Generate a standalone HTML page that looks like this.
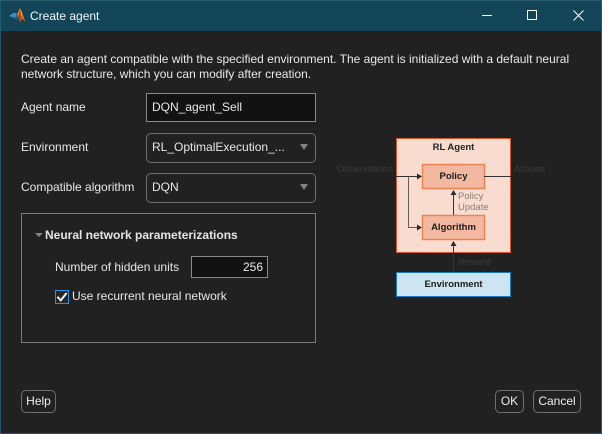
<!DOCTYPE html>
<html>
<head>
<meta charset="utf-8">
<style>
html,body{margin:0;padding:0;background:#212121;}
body{width:602px;height:434px;position:relative;overflow:hidden;font-family:"Liberation Sans",sans-serif;font-size:12px;color:#e8e8e8;}
.a{position:absolute;white-space:nowrap;line-height:14px;}
.box{position:absolute;box-sizing:border-box;}
.tb{background:#134559;left:0;top:0;width:602px;height:31px;}
.in{border:1px solid #8a8a8a;background:#121212;}
.dd{border:1px solid #707070;border-radius:5px;background:#212121;}
.btn{border:1px solid #6f6f6f;border-radius:5px;text-align:center;line-height:21px;color:#eee;background:#212121;}
.tri{position:absolute;width:0;height:0;border-left:4px solid transparent;border-right:4px solid transparent;border-top:6px solid #858585;}
</style>
</head>
<body>
<div class="box tb"></div>
<div class="box" style="left:0;top:0;width:602px;height:434px;border:1px solid #1f5a70;border-top-color:#2a5d70;"></div>
<svg class="box" style="left:9px;top:7px" width="17" height="16" viewBox="0 0 17 16">
  <path d="M0 9 L5 5.5 L8 7 L5.5 11 L3.5 10Z" fill="#3f8fc8"/>
  <path d="M5.5 11 L8 7 L9 5 L9.5 10 L7 13.5Z" fill="#27608f"/>
  <path d="M8 7 L11 1 L13 5.5 L16.5 15 L13.5 11.5 L11 15 L9.5 10Z" fill="#e2701f"/>
  <path d="M11 1 L9.5 10 L11 15 L13 9Z" fill="#c8401a"/>
  <path d="M11 1 L13 5.5 L13.5 11.5 L12 7Z" fill="#f2b73a"/>
</svg>
<div class="a" style="left:30px;top:9px;color:#f2f6f8;">Create agent</div>
<svg class="box" style="left:480px;top:8px" width="110" height="16" viewBox="0 0 110 16">
  <path d="M2 7.5H12" stroke="#fff" stroke-width="1" fill="none"/>
  <rect x="47.5" y="2.5" width="9" height="9" stroke="#fff" stroke-width="1" fill="none"/>
  <path d="M93.5 2.5L103.5 12.5M103.5 2.5L93.5 12.5" stroke="#fff" stroke-width="1" fill="none"/>
</svg>

<div class="a" style="left:21px;top:52px;">Create an agent compatible with the specified environment. The agent is initialized with a default neural</div>
<div class="a" style="left:21px;top:67px;">network structure, which you can modify after creation.</div>

<div class="a" style="left:21px;top:100px;">Agent name</div>
<div class="box in" style="left:146px;top:93px;width:170px;height:29px;"></div>
<div class="a" style="left:152px;top:100px;">DQN_agent_Sell</div>

<div class="a" style="left:21px;top:140px;">Environment</div>
<div class="box dd" style="left:146px;top:133px;width:170px;height:30px;"></div>
<div class="a" style="left:152px;top:140px;">RL_OptimalExecution_...</div>
<div class="tri" style="left:300px;top:144px;"></div>

<div class="a" style="left:21px;top:180px;">Compatible algorithm</div>
<div class="box dd" style="left:146px;top:173px;width:170px;height:30px;"></div>
<div class="a" style="left:152px;top:180px;">DQN</div>
<div class="tri" style="left:300px;top:184px;"></div>

<div class="box" style="left:21px;top:213px;width:295px;height:130px;border:1px solid #7a7a7a;"></div>
<div class="tri" style="left:35px;top:233px;border-left-width:4px;border-right-width:4px;border-top-width:4px;"></div>
<div class="a" style="left:45px;top:228px;font-weight:bold;color:#e4e4e4;">Neural network parameterizations</div>

<div class="a" style="left:55px;top:260px;">Number of hidden units</div>
<div class="box in" style="left:191px;top:256px;width:77px;height:22px;"></div>
<div class="a" style="left:191px;top:260px;width:72px;text-align:right;">256</div>

<div class="box" style="left:55px;top:290px;width:14px;height:14px;border:1px solid #2f8fe0;background:#262626;"></div>
<svg class="box" style="left:55px;top:290px" width="14" height="14" viewBox="0 0 14 14"><path d="M2.4 6.8L5.8 10.4L11.6 3" stroke="#f2f2f2" stroke-width="2" fill="none"/></svg>
<div class="a" style="left:72px;top:289px;">Use recurrent neural network</div>

<svg class="box" style="left:330px;top:130px" width="230" height="175" viewBox="0 0 230 175" font-family="Liberation Sans, sans-serif" font-size="9.5">
  <rect x="66.5" y="8.5" width="114" height="114" fill="#f8dccf" stroke="#d9582b" stroke-width="1"/>
  <rect x="92.5" y="34.5" width="62" height="24" fill="#f3b9a0" stroke="#ee8153" stroke-width="1.5"/>
  <rect x="92.5" y="85.5" width="62" height="24" fill="#f3b9a0" stroke="#ee8153" stroke-width="1.5"/>
  <rect x="66.5" y="142.5" width="114" height="24" fill="#cde4f3" stroke="#1a7cc0" stroke-width="1"/>
  <path d="M66 46.5H88M154 46.5H181" stroke="#3a3230" stroke-width="1" fill="none"/>
  <path d="M78.5 46.5V97.5H88" stroke="#6a5a54" stroke-width="1" fill="none"/>
  <path d="M123.5 85V64M123.5 142V115" stroke="#3a3230" stroke-width="1" fill="none"/>
  <path d="M92 46.5L87 43.5V49.5ZM92 97.5L87 94.5V100.5ZM123.5 60L120.5 65H126.5ZM123.5 111L120.5 116H126.5Z" fill="#2a2a2a"/>
  <text x="7" y="42" fill="#3c3c3c" font-size="9.5">Observations</text>
  <text x="184" y="42" fill="#3c3c3c" font-size="9.5">Actions</text>
  <text x="123.5" y="20" fill="#222" font-weight="bold" text-anchor="middle" font-size="9.5">RL Agent</text>
  <text x="123.5" y="49" fill="#1a1a1a" font-weight="bold" text-anchor="middle" font-size="9.5">Policy</text>
  <text x="123.5" y="100" fill="#1a1a1a" font-weight="bold" text-anchor="middle" font-size="9.5">Algorithm</text>
  <text x="123.5" y="157" fill="#1a1a1a" font-weight="bold" text-anchor="middle" font-size="9.5">Environment</text>
  <text x="128" y="69" fill="#8a7e78">Policy</text>
  <text x="128" y="80" fill="#8a7e78">Update</text>
  <text x="128" y="135" fill="#3c3c3c">Reward</text>
</svg>

<div class="box btn" style="left:21px;top:390px;width:35px;height:23px;">Help</div>
<div class="box btn" style="left:495px;top:390px;width:29px;height:23px;">OK</div>
<div class="box btn" style="left:533px;top:390px;width:48px;height:23px;">Cancel</div>
</body>
</html>
